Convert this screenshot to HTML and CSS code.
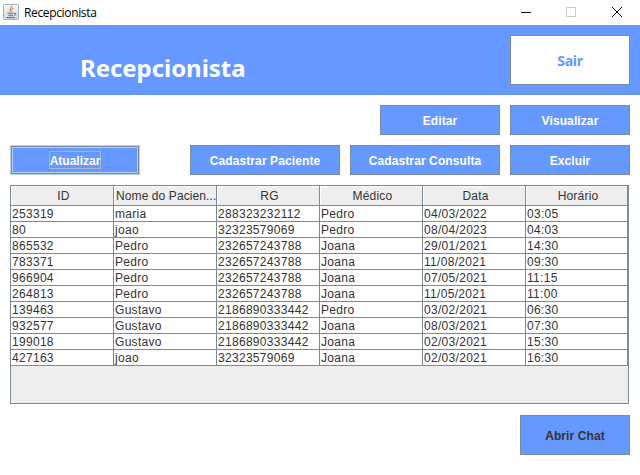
FILE: index.html
```html
<!DOCTYPE html>
<html lang="pt-BR">
<head>
<meta charset="utf-8">
<title>Recepcionista</title>
<link rel="stylesheet" href="styles.css">
</head>
<body>
<div class="titlebar">
  <svg class="app-icon" width="16" height="16" viewBox="0 0 16 16">
    <defs><linearGradient id="g" x1="0" y1="0" x2="0" y2="1"><stop offset="0" stop-color="#f8f8f8"/><stop offset="1" stop-color="#c9d4de"/></linearGradient></defs>
    <rect x=".5" y=".5" width="15" height="15" rx="1" fill="url(#g)" stroke="#9fb0bf"/>
    <path d="M9 1.500C9.500 3.500 5.500 4.500 7.500 7.500M10.500 4C8 5.500 8 6 8.500 7.500" fill="none" stroke="#e58a3c" stroke-width="1.100"/>
    <path d="M4.500 9.200h6M5.500 11.300h4.500M3.500 13.500h8.500M11 9.500c2.500-1 2.500 1.500 0 2" fill="none" stroke="#4a7196"/>
  </svg>
  <span class="window-name">Recepcionista</span>
  <svg class="window-controls" width="120" height="24" viewBox="0 0 120 24" fill="none" shape-rendering="crispEdges">
    <path d="M1 12.500h10" stroke="#000"/>
    <rect x="46.500" y="7.500" width="9" height="9" stroke="#ccc"/>
    <path d="M92 7l10 10M102 7l-10 10" stroke="#000" shape-rendering="auto"/>
  </svg>
</div>
<header class="banner">
  <h1>Recepcionista</h1>
  <button class="btn exit">Sair</button>
</header>
<main>
  <div class="actions top">
    <button class="btn w120">Editar</button>
    <button class="btn w120">Visualizar</button>
  </div>
  <div class="actions">
    <button class="btn refresh"><span>Atualizar</span></button>
    <button class="btn w150">Cadastrar Paciente</button>
    <button class="btn w150">Cadastrar Consulta</button>
    <button class="btn w120">Excluir</button>
  </div>
  <div class="scroll-pane">
    <table>
      <thead><tr><th>ID</th><th class="clipped">Nome do Pacien...</th><th>RG</th><th>Médico</th><th>Data</th><th>Horário</th></tr></thead>
      <tbody>
        <tr><td>253319</td><td>maria</td><td>288323232112</td><td>Pedro</td><td>04/03/2022</td><td>03:05</td></tr>
        <tr><td>80</td><td>joao</td><td>32323579069</td><td>Pedro</td><td>08/04/2023</td><td>04:03</td></tr>
        <tr><td>865532</td><td>Pedro</td><td>232657243788</td><td>Joana</td><td>29/01/2021</td><td>14:30</td></tr>
        <tr><td>783371</td><td>Pedro</td><td>232657243788</td><td>Joana</td><td>11/08/2021</td><td>09:30</td></tr>
        <tr><td>966904</td><td>Pedro</td><td>232657243788</td><td>Joana</td><td>07/05/2021</td><td>11:15</td></tr>
        <tr><td>264813</td><td>Pedro</td><td>232657243788</td><td>Joana</td><td>11/05/2021</td><td>11:00</td></tr>
        <tr><td>139463</td><td>Gustavo</td><td>2186890333442</td><td>Pedro</td><td>03/02/2021</td><td>06:30</td></tr>
        <tr><td>932577</td><td>Gustavo</td><td>2186890333442</td><td>Joana</td><td>08/03/2021</td><td>07:30</td></tr>
        <tr><td>199018</td><td>Gustavo</td><td>2186890333442</td><td>Joana</td><td>02/03/2021</td><td>15:30</td></tr>
        <tr><td>427163</td><td>joao</td><td>32323579069</td><td>Joana</td><td>02/03/2021</td><td>16:30</td></tr>
      </tbody>
    </table>
  </div>
  <button class="btn chat">Abrir Chat</button>
</main>
</body>
</html>
```
FILE: styles.css
```css
* { box-sizing: border-box; }
body {
  margin: 0;
  width: 640px;
  height: 475px;
  overflow: hidden;
  background: #fff;
  color: #333;
  font: 12px "Liberation Sans", Arial, sans-serif;
}
.titlebar {
  display: flex;
  align-items: center;
  height: 25px;
  padding: 0 0 1px 3px;
}
.window-name {
  margin-left: 5px;
  color: #000;
  font: 12px "Open Sans", sans-serif;
  letter-spacing: -0.35px;
}
.window-controls { margin-left: auto; }
.banner {
  display: flex;
  justify-content: space-between;
  height: 70px;
  padding: 10px 10px 10px 80px;
  background: #69f;
}
h1 {
  margin: 16px 0 0;
  color: #fff;
  font: bold 24px/34px "Noto Sans", sans-serif;
  letter-spacing: -0.05px;
}
.btn {
  height: 30px;
  padding: 1px 0 0;
  border: 1px solid #7a8a99;
  background: #69f;
  color: #fff;
  font: bold 12px/14px "Liberation Sans", Arial, sans-serif;
  letter-spacing: 0.1px;
  white-space: nowrap;
}
.exit {
  width: 120px;
  height: 50px;
  background: #fff;
  color: #69f;
  font: bold 14px "Noto Sans", sans-serif;
  letter-spacing: -0.2px;
}
main {
  display: flex;
  flex-direction: column;
  padding: 10px;
}
.actions {
  display: flex;
  justify-content: flex-end;
  gap: 10px;
  margin-bottom: 10px;
}
.w120 { width: 120px; }
.w150 { width: 150px; }
.refresh {
  width: 130px;
  margin-right: auto;
  padding: 0;
  border-color: #b8cfe5;
  box-shadow: inset 0 0 0 1px #7a8a99, inset 0 0 0 2px #b8cfe5;
  letter-spacing: 0;
}
.refresh span {
  display: inline-block;
  height: 18px;
  border: 1px solid #a3b8cc;
  line-height: 18px;
}
.scroll-pane {
  width: 619px;
  height: 219px;
  border: 1px solid #7a8a99;
  background: #eee;
}
table {
  width: 617px;
  border-collapse: separate;
  border-spacing: 0;
  table-layout: fixed;
}
th, td {
  width: 103px;
  padding: 0 1px;
  border-right: 1px solid #7a8a99;
  border-bottom: 1px solid #7a8a99;
  overflow: hidden;
  white-space: nowrap;
}
th:last-child, td:last-child { width: 102px; }
th {
  height: 20px;
  padding: 1px 0 0 3px;
  background: #eee;
  box-shadow: inset 1px 1px #fff;
  font-weight: normal;
  line-height: 18px;
  letter-spacing: 0.2px;
}
.clipped {
  padding-left: 2px;
  letter-spacing: 0.1px;
  text-align: left;
}
td {
  height: 16px;
  padding-top: 1px;
  background: #fff;
  line-height: 14px;
  letter-spacing: 0.3px;
}
.chat {
  align-self: flex-end;
  width: 110px;
  height: 40px;
  margin-top: 11px;
  padding-top: 2px;
  color: #333;
}
```
